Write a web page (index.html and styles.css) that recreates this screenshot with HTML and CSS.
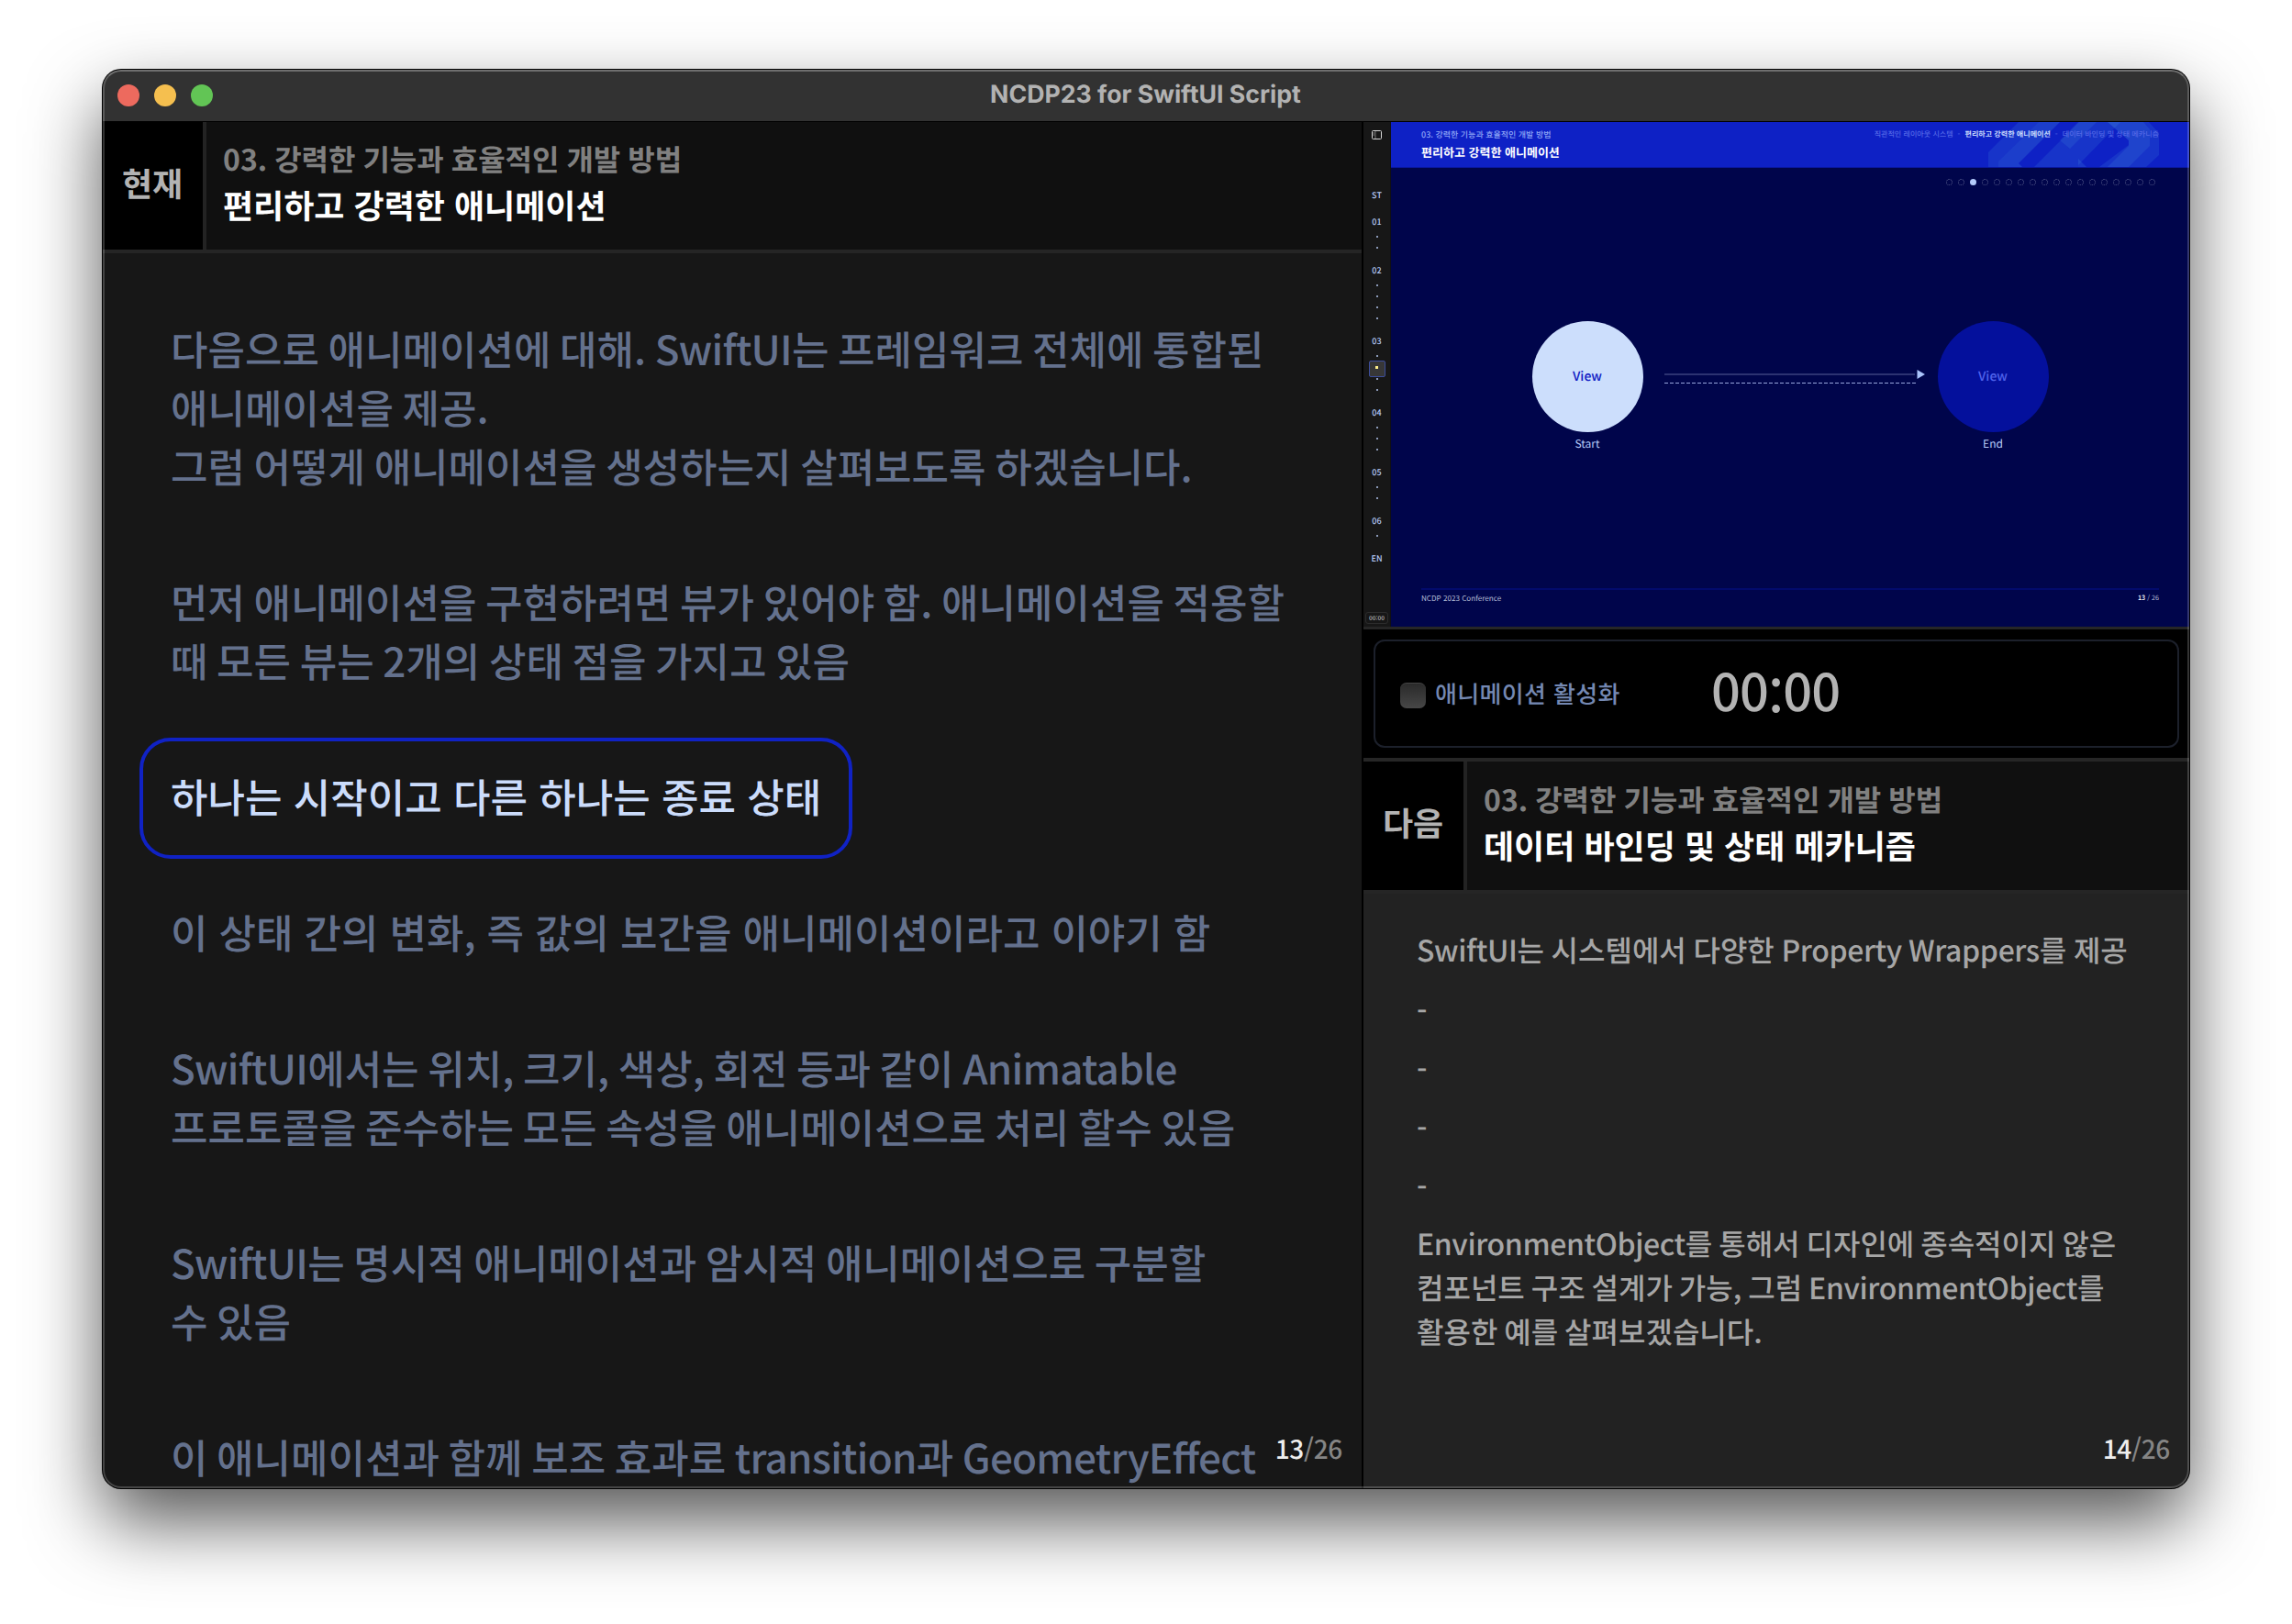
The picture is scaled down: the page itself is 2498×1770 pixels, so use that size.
FILE: index.html
```html
<!DOCTYPE html>
<html lang="ko">
<head>
<meta charset="utf-8">
<title>NCDP23 for SwiftUI Script</title>
<link rel="stylesheet" href="styles.css">
</head>
<body>
<main class="window">
  <header class="titlebar">
    <div class="lights"><i class="light red"></i><i class="light yellow"></i><i class="light green"></i></div>
    <h1 class="window-title">NCDP23 for SwiftUI Script</h1>
  </header>
  <div class="content">
    <section class="current">
      <div class="heading">
        <div class="tag">현재</div>
        <div class="heading-text">
          <p class="chapter">03. 강력한 기능과 효율적인 개발 방법</p>
          <h2 class="topic">편리하고 강력한 애니메이션</h2>
        </div>
      </div>
      <div class="script">
        <p class="line">다음으로 애니메이션에 대해. <span class="latin">SwiftUI</span>는 프레임워크 전체에 통합된<br>애니메이션을 제공.<br>그럼 어떻게 애니메이션을 생성하는지 살펴보도록 하겠습니다.</p>
        <p class="line">먼저 애니메이션을 구현하려면 뷰가 있어야 함. 애니메이션을 적용할<br>때 모든 뷰는 2개의 상태 점을 가지고 있음</p>
        <p class="line active">하나는 시작이고 다른 하나는 종료 상태</p>
        <p class="line single">이 상태 간의 변화, 즉 값의 보간을 애니메이션이라고 이야기 함</p>
        <p class="line"><span class="latin">SwiftUI</span>에서는 위치, 크기, 색상, 회전 등과 같이 <span class="latin">Animatable</span><br>프로토콜을 준수하는 모든 속성을 애니메이션으로 처리 할수 있음</p>
        <p class="line"><span class="latin">SwiftUI</span>는 명시적 애니메이션과 암시적 애니메이션으로 구분할<br>수 있음</p>
        <p class="line">이 애니메이션과 함께 보조 효과로 <span class="latin">transition</span>과 <span class="latin">GeometryEffect</span></p>
      </div>
      <div class="page"><b>13</b>/26</div>
    </section>
    <section class="side">
      <div class="preview">
        <nav class="rail">
          <svg class="rail-icon" viewBox="0 0 11 10" width="11" height="10"><rect x=".5" y=".5" width="10" height="9" rx="1" fill="none" stroke="#d8d8d8"/><path d="M4 1v8" stroke="#777"/><path d="M1.7 3h1M1.7 5h1" stroke="#ccc"/></svg>
          <div class="rail-list">
            <span class="num">ST</span>
            <span class="num">01</span><i class="dot"></i><i class="dot"></i>
            <span class="num">02</span><i class="dot"></i><i class="dot"></i><i class="dot"></i><i class="dot"></i>
            <span class="num">03</span><i class="dot"></i><i class="dot on"></i><i class="dot"></i><i class="dot"></i>
            <span class="num">04</span><i class="dot"></i><i class="dot"></i><i class="dot"></i>
            <span class="num">05</span><i class="dot"></i><i class="dot"></i>
            <span class="num">06</span><i class="dot"></i>
            <span class="num">EN</span>
          </div>
          <div class="rail-time">00:00</div>
        </nav>
        <div class="slide">
          <div class="slide-head">
            <svg class="pattern" viewBox="0 0 186 49" width="186" height="49">
              <g fill="#4b9be0">
                <path opacity=".16" d="M0 49V33L33 0H78L33 45L37 49Z"/>
                <path opacity=".1" d="M11 49V43L55 0H78L33 45L37 49Z"/>
                <path opacity=".16" d="M50 49L99 0H144L98 47V49Z"/>
                <path opacity=".16" d="M78 20L98 0H118L89 29Z"/>
                <path opacity=".2" d="M98 40V49H107Z"/>
                <path opacity=".16" d="M130 0H175L186 12V36L172 49H121L153 25V20Z"/>
                <path opacity=".16" d="M130 0H169L176 8V26L153 49H130L153 26V20Z"/>
              </g>
            </svg>
            <div class="slide-titles"><p class="slide-chapter">03. 강력한 기능과 효율적인 개발 방법</p><p class="slide-topic">편리하고 강력한 애니메이션</p></div>
            <p class="crumbs"><span>직관적인 레이아웃 시스템</span><i>-</i><b>편리하고 강력한 애니메이션</b><i>-</i><span>데이터 바인딩 및 상태 메카니즘</span></p>
          </div>
          <div class="steps"><i></i><i></i><i class="on"></i><i></i><i></i><i></i><i></i><i></i><i></i><i></i><i></i><i></i><i></i><i></i><i></i><i></i><i></i><i></i></div>
          <div class="diagram">
            <figure class="node start"><div>View</div><figcaption>Start</figcaption></figure>
            <svg class="arrow" viewBox="0 0 285 16" width="285" height="16"><path d="M0 6H273" stroke="#2c3271" stroke-width="2"/><path d="M275.500 1V11L284 6Z" fill="#a9c4fb"/><path d="M0 15.500H274" stroke="#98a6dc" stroke-width="1" stroke-dasharray="4 2"/></svg>
            <figure class="node end"><div>View</div><figcaption>End</figcaption></figure>
          </div>
          <div class="slide-foot"><span>NCDP 2023 Conference</span><span><b>13</b> / 26</span></div>
        </div>
      </div>
      <div class="timer">
        <div class="timer-card">
          <span class="check"></span><span class="check-label">애니메이션 활성화</span><span class="clock">00<span class="colon">:</span>00</span>
        </div>
      </div>
      <div class="heading next-heading">
        <div class="tag">다음</div>
        <div class="heading-text">
          <p class="chapter">03. 강력한 기능과 효율적인 개발 방법</p>
          <h2 class="topic">데이터 바인딩 및 상태 메카니즘</h2>
        </div>
      </div>
      <div class="next">
        <p class="lead"><span class="latin">SwiftUI</span>는 시스템에서 다양한 <span class="latin">Property Wrappers</span>를 제공</p>
        <p class="dash">-</p>
        <p class="dash">-</p>
        <p class="dash">-</p>
        <p class="dash">-</p>
        <p><span class="latin">EnvironmentObject</span>를 통해서 디자인에 종속적이지 않은<br>컴포넌트 구조 설계가 가능, 그럼 <span class="latin">EnvironmentObject</span>를<br>활용한 예를 살펴보겠습니다.</p>
      </div>
      <div class="page"><b>14</b>/26</div>
    </section>
  </div>
</main>
</body>
</html>
```
FILE: styles.css
```css
* { box-sizing: border-box; margin: 0; padding: 0; }
body { width: 2498px; height: 1770px; padding: 76px 112px; overflow: hidden; background: #fff; font-family: "Noto Sans CJK KR", sans-serif; font-weight: 500; text-rendering: geometricPrecision; }
i { font-style: normal; }
p, h1, h2, span, div { white-space: nowrap; }

.window { position: relative; width: 2274px; height: 1546px; border-radius: 20px; background: #171717; box-shadow: 0 0 0 1px #000, 0 36px 80px rgba(0,0,0,.67); display: flex; flex-direction: column; overflow: hidden; }
.window::after { content: ""; position: absolute; inset: 0; border: 2px solid rgba(255,255,255,.2); border-top-color: rgba(255,255,255,.3); border-radius: 20px; pointer-events: none; }
.titlebar { flex: none; height: 57px; background: #323232; border-bottom: 1px solid #000; display: grid; grid-template-columns: 1fr auto 1fr; align-items: center; }
.lights { display: flex; gap: 16px; padding-left: 16px; }
.light { width: 24px; height: 24px; border-radius: 50%; }
.red { background: #ed6a5e; }
.yellow { background: #f5bf4f; }
.green { background: #62c555; }
.window-title { font: 700 26.700px/54px Inter, sans-serif; padding: 0 1px 2px 0; color: #b2b2b2; }

.content { flex: 1; display: grid; grid-template-columns: 1372px 900px; column-gap: 2px; background: #000; min-height: 0; }
.current, .side { position: relative; display: flex; flex-direction: column; overflow: hidden; }
.current { background: #171717; }
.side { background: #222; }

.heading { flex: none; height: 143px; display: flex; background: #101010; border-bottom: 4px solid #252525; }
.tag { width: 113px; background: #000; border-right: 4px solid #232323; color: #b3b3b3; font-size: 36px; line-height: 132px; font-weight: 700; text-align: center; padding-right: 1px; }
.heading-text { padding: 16px 0 0 18px; }
.chapter { font-size: 32px; line-height: 48px; font-weight: 700; color: #808080; word-spacing: -1px; }
.topic { font-size: 36px; line-height: 52px; font-weight: 700; color: #fff; }

.script { display: flex; flex-direction: column; align-items: flex-start; gap: 20px; padding: 42px 0 0 42px; }
.line { padding: 29px 32px 35px; font-size: 44px; line-height: 64px; color: #64718d; word-spacing: -2.700px; }
.line .latin { letter-spacing: -.75px; font-feature-settings: "liga" 1; }
.line.single { word-spacing: -.3px; }
.line.active { color: #cbdcfb; position: relative; word-spacing: 0; }
.line.active::before { content: ""; position: absolute; inset: -2px; border: 4px solid #1022c4; border-radius: 34px; }
.page { position: absolute; right: 21px; bottom: 22px; font-size: 28px; line-height: 42px; letter-spacing: -.3px; color: #858585; }
.page b { font-weight: 500; color: #eee; }

.preview { height: 550px; display: flex; flex: none; }
.rail { width: 30px; background: #171717; border-right: 1px solid #101014; display: flex; flex-direction: column; align-items: center; padding: 9px 0 3px; }
.rail-icon { flex: none; }
.rail-list { display: flex; flex-direction: column; align-items: center; padding-top: 42px; flex: 1; }
.num { height: 21px; line-height: 21px; margin-top: 8px; font-size: 9px; color: #b6cbf8; }
.dot { width: 16px; height: 12px; display: flex; align-items: center; justify-content: center; }
.dot::before { content: ""; width: 2px; height: 2px; background: #8b99b8; }
.dot.on { height: 13px; position: relative; }
.dot.on::before { background: #fff08a; width: 3px; height: 3px; z-index: 1; }
.dot.on::after { content: ""; position: absolute; left: -.5px; top: -1.500px; width: 16px; height: 16px; border: 1px solid #3c4d9c; border-radius: 2px; background: #373737; }
.rail-time { width: 25px; height: 13px; border: 1px solid #2c2c2c; border-radius: 3px; font-size: 6.500px; line-height: 11px; text-align: center; color: #bbb; }

.slide { width: 870px; background: #00054b; display: flex; flex-direction: column; position: relative; }
.slide-head { position: relative; height: 50px; background: #0e21c5; border-bottom: 1px solid #0a18a0; display: flex; justify-content: space-between; padding: 0 33px; }
.pattern { position: absolute; right: 33px; top: 0; }
.slide-titles { padding-top: 7px; }
.slide-chapter { font-size: 9px; line-height: 14px; color: #8ea6f5; }
.slide-topic { font-size: 13px; line-height: 24px; font-weight: 700; color: #fff; }
.crumbs { position: relative; display: flex; gap: 5px; padding-top: 6px; font-size: 8.050px; line-height: 15px; color: #5468e6; }
.crumbs b { color: #c9dafc; font-weight: 700; }
.steps { display: flex; justify-content: flex-end; gap: 6px; padding: 12px 37px 0 0; }
.steps i { width: 7px; height: 7px; border-radius: 50%; border: 1px dotted #565d8c; }
.steps .on { background: #b4cbfb; border-color: #b4cbfb; }
.diagram { display: flex; justify-content: space-between; padding: 148px 153.500px 0; }
.node { width: 121px; text-align: center; }
.node div { height: 121px; border-radius: 50%; line-height: 121px; font-size: 14px; }
.start div { background: #ccdefc; color: #1020c4; }
.end div { background: #04109c; color: #4f62ea; }
.node figcaption { font-size: 12px; line-height: 26px; color: #b6cbf8; font-weight: 400; }
.arrow { margin: 52px 0 0 11px; }
.slide-foot { margin: auto 33px 20px; border-top: 2px solid #020a6c; display: flex; justify-content: space-between; font-size: 8.100px; line-height: 20px; color: #b4bcd6; font-weight: 400; }
.slide-foot span + span { font-size: 7.200px; line-height: 19px; }
.slide-foot b { color: #fff; font-weight: 500; }

.timer { flex: none; height: 147px; border-top: 3px solid #262626; border-bottom: 4px solid #262626; background: #000; padding: 11px; }
.timer-card { height: 118px; border: 2px solid #1c202b; border-radius: 12px; display: flex; align-items: center; padding-left: 27px; }
.check { width: 28px; height: 28px; border-radius: 7px; background: linear-gradient(#2a2a2a, #474747); border-top: 1px solid #444; margin-top: 4px; }
.check-label { width: 202px; margin-left: 10px; font-size: 26px; letter-spacing: .35px; padding-bottom: 2px; color: #7488b2; }
.clock { margin-left: 99px; font-size: 56px; line-height: 80px; padding-bottom: 9px; letter-spacing: -.8px; color: #b3b3b3; }
.colon { display: inline-block; transform: translateY(6px); }
.next-heading { height: 144px; }
.next-heading .heading-text { padding-top: 17px; }
.next-heading .tag { line-height: 133px; }
.next { padding: 37px 0 0 58px; display: flex; flex-direction: column; gap: 16px; font-size: 32px; line-height: 48px; color: #a6a6a6; word-spacing: -2px; }
.next .lead { word-spacing: -1.300px; }
.next .latin { letter-spacing: -.4px; }
.dash { height: 48px; line-height: 53px; }
```
